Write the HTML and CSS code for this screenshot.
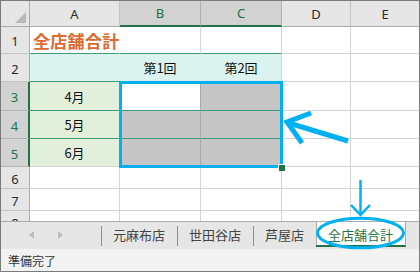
FILE: index.html
```html
<!DOCTYPE html>
<html lang="ja">
<head>
<meta charset="utf-8">
<title>Excel</title>
<link rel="stylesheet" href="styles.css">
</head>
<body>
<div class="frame">
  <div class="sheet">
    <div class="grid">
      <div class="hd corner"><span class="tri"></span></div>
      <div class="hd col">A</div>
      <div class="hd col sel">B</div>
      <div class="hd col sel">C</div>
      <div class="hd col">D</div>
      <div class="hd col last">E</div>

      <div class="hd row">1</div>
      <div class="c title t-bottom no-right">全店舗合計</div>
      <div class="c t-bottom"></div>
      <div class="c t-bottom"></div>
      <div class="c"></div>
      <div class="c last"></div>

      <div class="hd row">2</div>
      <div class="c cyan t-bottom no-right"></div>
      <div class="c cyan t-bottom no-right ctr">第1回</div>
      <div class="c cyan t-bottom ctr">第2回</div>
      <div class="c"></div>
      <div class="c last"></div>

      <div class="hd row sel">3</div>
      <div class="c green t-bottom ctr">4月</div>
      <div class="c t-bottom dark-right"></div>
      <div class="c shade t-bottom"></div>
      <div class="c"></div>
      <div class="c last"></div>

      <div class="hd row sel">4</div>
      <div class="c green t-bottom ctr">5月</div>
      <div class="c shade t-bottom dark-right"></div>
      <div class="c shade t-bottom"></div>
      <div class="c"></div>
      <div class="c last"></div>

      <div class="hd row sel">5</div>
      <div class="c green ctr">6月</div>
      <div class="c shade dark-right"></div>
      <div class="c shade"></div>
      <div class="c"></div>
      <div class="c last"></div>

      <div class="hd row">6</div>
      <div class="c"></div><div class="c"></div><div class="c"></div><div class="c"></div><div class="c last"></div>

      <div class="hd row">7</div>
      <div class="c"></div><div class="c"></div><div class="c"></div><div class="c"></div><div class="c last"></div>

      <div class="hd row">8</div>
      <div class="c"></div><div class="c"></div><div class="c"></div><div class="c"></div><div class="c last"></div>
    </div>
    <div class="selection"></div>
    <div class="fill-handle"></div>
  </div>

  <div class="tabbar">
    <div class="nav">
      <span class="arrow-l"></span>
      <span class="arrow-r"></span>
    </div>
    <div class="tab">元麻布店</div>
    <div class="tab">世田谷店</div>
    <div class="tab">芦屋店</div>
    <div class="tab active">全店舗合計</div>
  </div>

  <div class="status">準備完了</div>

  <svg class="annot" width="420" height="272" viewBox="0 0 420 272">
    <g fill="none" stroke="#00b0f0">
      <path d="M348 141 L287 122.5" stroke-width="5"/>
      <path d="M311 113 L287 122 L302 143" stroke-width="5" stroke-linejoin="miter"/>
      <path d="M360.5 180 L360.5 214" stroke-width="2.5"/>
      <path d="M351 205 L360.5 215 L370 205" stroke-width="2.5"/>
      <ellipse cx="360.5" cy="233" rx="43" ry="14.8" stroke-width="3"/>
    </g>
  </svg>
</div>
</body>
</html>
```

FILE: styles.css
```css
* { box-sizing: border-box; }

html, body {
  margin: 0;
  padding: 0;
  background: #ffffff;
}

.frame {
  position: relative;
  width: 420px;
  height: 272px;
  border: 1px solid #7b7b7b;
  overflow: hidden;
  font-family: "Noto Sans", "Noto Sans CJK JP", sans-serif;
  color: #222222;
  display: flex;
  flex-direction: column;
}

.sheet {
  position: relative;
  height: 220px;
  overflow: hidden;
  background: #ffffff;
  flex: none;
}

.grid {
  display: grid;
  grid-template-columns: 29px 90px 81px 81px 69px 68px;
  grid-template-rows: 26px 27px 28px 29px 28px 28px 22px 22px 22px;
}

.hd {
  background: #e6e6e6;
  font-size: 13px;
  color: #2a2a2a;
  display: flex;
  align-items: center;
  justify-content: center;
}

.hd.col {
  border-right: 1px solid #c4c4c4;
  border-bottom: 1px solid #ababab;
}

.hd.col.last { border-right: none; }

.hd.col.sel {
  background: #d2d2d2;
  color: #217346;
  border-bottom: 2px solid #217346;
  border-right-color: #b0b0b0;
}

.hd.corner {
  position: relative;
  border-right: 1px solid #ababab;
  border-bottom: 1px solid #ababab;
}

.tri {
  position: absolute;
  right: 3px;
  bottom: 3px;
  width: 0;
  height: 0;
  border-left: 11px solid transparent;
  border-bottom: 11px solid #b9b9b9;
}

.hd.row {
  border-right: 1px solid #ababab;
  border-bottom: 1px solid #c6c6c6;
  padding-top: 2px;
}

.hd.row.sel {
  background: #d2d2d2;
  color: #217346;
  border-right: 2px solid #217346;
  border-bottom-color: #b4b4b4;
}

.c {
  border-right: 1px solid #d4d4d4;
  border-bottom: 1px solid #d4d4d4;
  font-family: "Noto Sans CJK JP", sans-serif;
  font-size: 13px;
  color: #111111;
  white-space: nowrap;
}

.c.last { border-right: none; }

.ctr {
  display: flex;
  align-items: center;
  justify-content: center;
}

.no-right { border-right-color: transparent; }

.t-bottom { border-bottom-color: #3a9a7a; }

.title {
  position: relative;
  z-index: 1;
  font-size: 17px;
  font-weight: bold;
  color: #dd6a2f;
  padding-left: 3px;
  display: flex;
  align-items: center;
  overflow: visible;
  letter-spacing: 0.3px;
}

.cyan { background: #dbf3ee; }

.green {
  background: #e2efda;
  border-right-color: transparent;
}

.shade { background: #c6c6c6; }

.dark-right { border-right-color: #a9a9a9; }

.selection {
  position: absolute;
  left: 118px;
  top: 80px;
  width: 164px;
  height: 87px;
  border: 3px solid #00b0f0;
  z-index: 2;
}

.fill-handle {
  position: absolute;
  left: 277px;
  top: 163px;
  width: 7px;
  height: 7px;
  background: #217346;
  border-left: 1px solid #ffffff;
  border-top: 1px solid #ffffff;
  z-index: 3;
}

.tabbar {
  flex: none;
  height: 28px;
  background: #e6e6e6;
  border-top: 1px solid #ababab;
  display: flex;
  align-items: stretch;
  font-family: "Noto Sans CJK JP", sans-serif;
  font-size: 13px;
  color: #444444;
}

.nav {
  width: 100px;
  position: relative;
}

.arrow-l, .arrow-r {
  position: absolute;
  top: 9px;
  width: 0;
  height: 0;
  border-top: 4px solid transparent;
  border-bottom: 4px solid transparent;
}

.arrow-l {
  left: 28px;
  border-right: 5px solid #bdbdbd;
}

.arrow-r {
  left: 57px;
  border-left: 5px solid #bdbdbd;
}

.tab {
  position: relative;
  padding: 0 12px;
  display: flex;
  align-items: center;
  height: 24px;
}

.tab::after {
  content: "";
  position: absolute;
  left: 0;
  top: 4px;
  bottom: 0;
  width: 1px;
  background: #8c8c8c;
}

.tab.active {
  background: #ffffff;
  color: #217346;
  height: 25px;
  border-bottom: 2px solid #217346;
  border-right: 1px solid #ababab;
  padding-top: 1px;
}

.tab.active::after {
  top: 0;
  background: #ababab;
}

.status {
  flex: none;
  height: 22px;
  background: #f2f2f2;
  font-family: "Noto Sans CJK JP", sans-serif;
  font-size: 12px;
  color: #333333;
  padding-left: 7px;
  display: flex;
  align-items: center;
}

.annot {
  position: absolute;
  left: -1px;
  top: -1px;
  z-index: 5;
  pointer-events: none;
}
```
